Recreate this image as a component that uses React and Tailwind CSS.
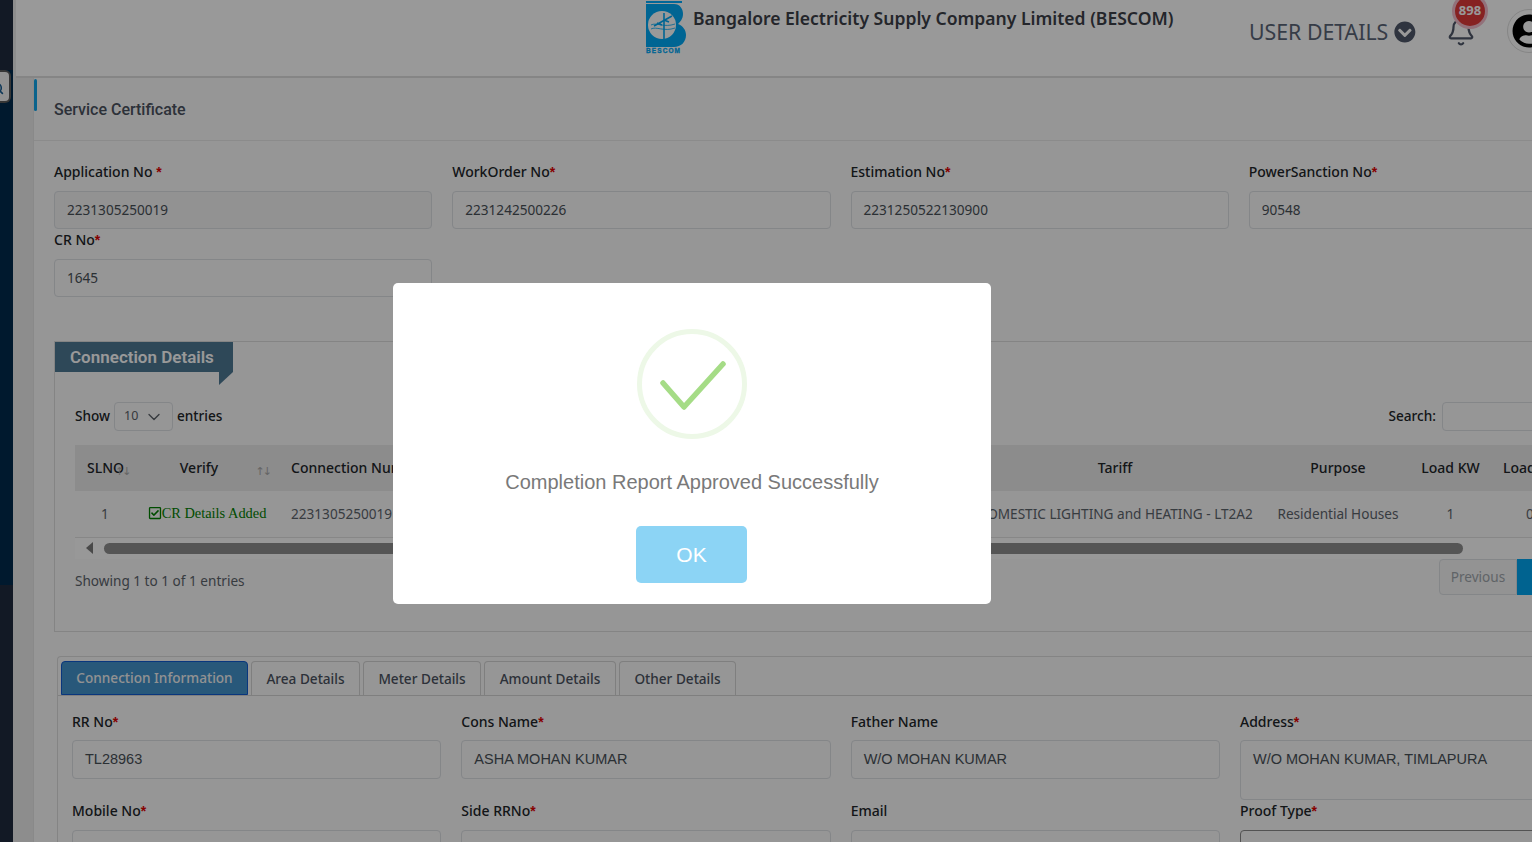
import { Bell, ChevronDown, Search } from "lucide-react";
import { FaChevronCircleDown, FaRegCheckSquare, FaUserCircle } from "react-icons/fa";

function Star() {
  return <span className="font-['Liberation_Sans',sans-serif] font-bold text-[#e00000]">*</span>;
}

function TopField({ label, value, space, muted }) {
  return (
    <div>
      <label className="block h-[22px] mb-2 text-[14px] leading-[22px] font-medium text-[#212529]">
        {label}
        {space ? " " : ""}
        <Star />
      </label>
      <div
        className={`h-[38px] px-3 flex items-center rounded border border-[#dcdfe3] text-[13.6px] text-[#495057] ${
          muted ? "bg-[#f3f3f4]" : "bg-[#fafafa]"
        }`}
      >
        {value}
      </div>
    </div>
  );
}

function InfoField({ label, required, value, area, dark, low }) {
  return (
    <div>
      <label
        className={`block h-[21px] text-[14px] leading-[21px] font-medium text-[#212529] ${low ? "mb-[9px]" : "mb-2"}`}
      >
        {label}
        {required && <Star />}
      </label>
      <div
        className={`px-3 rounded border bg-[#fafafa] font-['Liberation_Sans',sans-serif] text-[14.5px] text-[#495057] ${
          dark ? "border-[#8a8a8a]" : "border-[#dcdfe3]"
        } ${area ? "h-[60px] pt-[8px]" : "h-[39px] flex items-center"}`}
      >
        {value}
      </div>
    </div>
  );
}

function Sort({ className }) {
  return (
    <span
      className={`absolute font-['DejaVu_Sans',sans-serif] text-[11px] leading-[13px] font-normal tracking-[-2px] text-[#a8a8a8] ${className}`}
    >
      ↑↓
    </span>
  );
}

function Logo() {
  return (
    <svg width="44" height="54" viewBox="0 0 44 54" className="shrink-0">
      <rect x="2" y="0" width="36" height="2" fill="#00acff" />
      <path
        d="M2 3H30C36 3 39 8 39 13C39 18 36 21 34 23C39 25 42 29 42 34C42 41 37 46 30 46H2Z"
        fill="#00a8f5"
      />
      <circle cx="18" cy="24" r="14" fill="#fff" />
      <g stroke="#00a8f5" fill="none">
        <path d="M20 12V38" strokeWidth="1.6" />
        <path d="M7 24C12 21 20 27 31 23M7 28C12 25 20 31 31 27" strokeWidth="0.8" />
        <path d="M10 25L28 15M13 22L18 24M20 19L25 21" strokeWidth="1.6" />
      </g>
      <text
        x="2"
        y="52"
        textLength="34"
        className="font-['Liberation_Sans',sans-serif] text-[6.5px] font-bold"
        fill="#00a8f5"
        stroke="#00a8f5"
        strokeWidth="0.3"
      >
        BESCOM
      </text>
    </svg>
  );
}

const tabs = ["Area Details", "Meter Details", "Amount Details", "Other Details"];

export default function App() {
  return (
    <div className="relative flex h-screen w-full overflow-hidden bg-[#ececec] font-['Noto_Sans',sans-serif]">
      {/* Sidebar */}
      <div className="w-[13px] shrink-0 flex flex-col">
        <div className="h-[70px] bg-[#1e2b3f]" />
        <div className="h-[515px] bg-[#002b4d]" />
        <div className="flex-1 bg-[#1e2b3f]" />
      </div>
      <div className="absolute left-0 top-[70px] z-10 flex h-[33px] w-[11px] items-center overflow-hidden rounded-r-md border-r-2 border-y-2 border-[#5a5a5a] bg-[#f4f4f4]">
        <Search size={13} strokeWidth={3} className="-ml-[9px] mt-1 shrink-0 text-[#1b5f94]" />
      </div>

      <div className="flex-1 min-w-0 flex flex-col">
        {/* Header */}
        <header className="ml-[3px] h-[78px] shrink-0 flex border-b-2 border-[#dedede] bg-white">
          <div className="ml-[628px] mt-[1px]">
            <Logo />
          </div>
          <div className="ml-[5px] mt-[6px] w-[481px] shrink-0 whitespace-nowrap text-[17.55px] leading-[25px] font-semibold text-[#3c4048]">
            Bangalore Electricity Supply Company Limited (BESCOM)
          </div>
          <div className="ml-[75px] mt-[17px] flex h-[30px] w-[167px] shrink-0 items-center whitespace-nowrap text-[21.3px] text-[#5b6577]">
            USER DETAILS
            <FaChevronCircleDown size={22} className="ml-[6px] text-[#4f5869]" />
          </div>
          <div className="relative ml-[30px] mt-[17px] h-[30px] w-[30px] shrink-0">
            <Bell size={30} strokeWidth={1.8} className="text-[#4f5869]" />
            <span className="absolute left-[6px] top-[-24px] flex h-[36px] w-[36px] items-center justify-center rounded-full border-[3px] border-[#f4bccb] bg-[#e03a3a] text-[13px] font-bold text-white">
              898
            </span>
          </div>
          <div className="ml-[31px] mt-[9px] flex h-[44px] w-[44px] shrink-0 items-center justify-center rounded-full border border-[#dedede]">
            <FaUserCircle size={34} className="text-black" />
          </div>
        </header>

        {/* Card */}
        <main className="relative ml-[20px] w-[1614px] flex-1 border-l border-[#e4e4e4] bg-[#fafafa]">
          <div className="absolute left-0 top-[1px] h-[32px] w-[3px] rounded-full bg-[#12a5ea]" />
          <div className="h-[63px] flex items-center px-5 pt-[2px] border-b border-[#e8e8e8] font-['Roboto',sans-serif] text-[16px] font-medium text-[#4b535f]">
            Service Certificate
          </div>

          <div className="px-5 pt-5">
            <div className="grid grid-cols-4 gap-x-5">
              <TopField label="Application No" space value="2231305250019" muted />
              <TopField label="WorkOrder No" value="2231242500226" />
              <TopField label="Estimation No" value="2231250522130900" />
              <TopField label="PowerSanction No" value="90548" />
              <TopField label="CR No" value="1645" />
            </div>

            {/* Connection Details */}
            <section className="relative mt-[44px] h-[291px] border border-[#dcdcdc]">
              <div className="relative h-[30px] w-[178px] bg-[#4e7893] pl-[15px] font-['Roboto',sans-serif] text-[17px] leading-[30px] font-semibold text-white">
                Connection Details
                <div className="absolute right-0 top-[30px] h-0 w-0 border-t-[13px] border-r-[14px] border-t-[#4e7893] border-r-transparent" />
              </div>

              <div className="px-5 pt-[30px]">
                <div className="flex h-[29px] items-center justify-between text-[13.6px] font-medium text-[#212529]">
                  <div className="flex items-center">
                    Show
                    <span className="mx-1 flex h-[29px] w-[59px] items-center justify-between rounded border border-[#dcdfe3] pl-[9px] pr-[8px] text-[12.5px] font-normal text-[#5b6168]">
                      10
                      <ChevronDown size={20} strokeWidth={1.6} />
                    </span>
                    entries
                  </div>
                  <div className="flex items-center">
                    Search:
                    <span className="ml-[6px] h-[29px] w-[164px] rounded border border-[#dcdfe3]" />
                  </div>
                </div>

                <div className="mt-[14px] overflow-hidden">
                  <table className="w-[1700px] table-fixed border-collapse text-[13.6px]">
                    <colgroup>
                      <col className="w-[60px]" />
                      <col className="w-[144px]" />
                      <col className="w-[685px]" />
                      <col className="w-[302px]" />
                      <col className="w-[144px]" />
                      <col className="w-[81px]" />
                      <col />
                    </colgroup>
                    <thead>
                      <tr className="h-[46px] bg-[#e9e9e9] text-[14px] text-[#212529]">
                        <th className="relative pl-3 pb-[2px] text-left font-medium">
                          SLNO
                          <Sort className="left-[40px] top-[20px]" />
                        </th>
                        <th className="relative pr-[16px] pb-[2px] font-medium">
                          Verify
                          <Sort className="right-[9px] top-[20px]" />
                        </th>
                        <th className="pl-3 pb-[2px] text-left font-medium">Connection Number</th>
                        <th className="pb-[2px] font-medium">Tariff</th>
                        <th className="pb-[2px] font-medium">Purpose</th>
                        <th className="pb-[2px] font-medium">Load KW</th>
                        <th className="pl-3 pb-[2px] text-left font-medium">Load HP</th>
                      </tr>
                    </thead>
                    <tbody>
                      <tr className="h-[46px] border-b border-[#e2e2e2] text-[#5d646c]">
                        <td className="text-center">1</td>
                        <td className="text-center whitespace-nowrap font-['Liberation_Serif',serif] text-[14.4px] text-[green]">
                          <FaRegCheckSquare size={14} className="inline align-[-2px]" />
                          CR Details Added
                        </td>
                        <td className="pl-3">2231305250019</td>
                        <td className="text-center whitespace-nowrap">DOMESTIC LIGHTING and HEATING - LT2A2</td>
                        <td className="text-center whitespace-nowrap">Residential Houses</td>
                        <td className="text-center">1</td>
                        <td className="pl-[35px]">0</td>
                      </tr>
                    </tbody>
                  </table>
                </div>

                <div className="flex h-[21px] items-center bg-[#fdfdfd]">
                  <div className="ml-[11px] h-0 w-0 border-y-[6px] border-r-[7px] border-y-transparent border-r-[#7a7a7a]" />
                  <div className="ml-[11px] h-[11px] w-[1359px] rounded-full bg-[#8e8e8e]" />
                </div>

                <div className="flex justify-between">
                  <div className="mt-[12px] text-[13.6px] leading-[20px] text-[#5d646c]">
                    Showing 1 to 1 of 1 entries
                  </div>
                  <div className="flex h-[36px] text-[13.6px]">
                    <span className="flex w-[78px] items-center justify-center rounded-l border border-[#dcdfe3] bg-[#f5f5f5] pt-[2px] text-[#a0a6ac]">
                      Previous
                    </span>
                    <span className="flex w-[39px] items-center justify-center bg-[#00a5f0] text-white">1</span>
                    <span className="flex w-[50px] items-center justify-center rounded-r border border-[#dcdfe3] text-[#a0a6ac]">
                      Next
                    </span>
                  </div>
                </div>
              </div>
            </section>

            {/* Tabs */}
            <section className="mt-[24px] ml-[3px] rounded-t border-t border-l border-[#dcdcdc]">
              <div className="flex gap-[3px] pl-[3px] pt-1 h-[38px] text-[13.6px] font-medium">
                <div className="flex w-[187px] items-center justify-center rounded-t border border-[#0f5ad0] bg-[#4393cc] pt-px text-[#f4f4f4]">
                  Connection Information
                </div>
                {tabs.map((tab) => (
                  <div
                    key={tab}
                    className={`flex items-center justify-center rounded-t border border-b-0 border-[#d4d4d4] pt-px text-[#4b535f] ${
                      tab === "Area Details"
                        ? "w-[109px]"
                        : tab === "Meter Details"
                          ? "w-[118px]"
                          : tab === "Amount Details"
                            ? "w-[132px]"
                            : "w-[117px]"
                    }`}
                  >
                    {tab}
                  </div>
                ))}
              </div>
              <div className="border-t border-[#d4d4d4] pl-[14px] pt-[15px]">
                <div className="grid grid-cols-[repeat(4,369.33px)] gap-x-5 items-start">
                  <InfoField label="RR No" required value="TL28963" />
                  <InfoField label="Cons Name" required value="ASHA MOHAN KUMAR" />
                  <InfoField label="Father Name" value="W/O MOHAN KUMAR" />
                  <InfoField label="Address" required area value="W/O MOHAN KUMAR, TIMLAPURA" />
                  <InfoField label="Mobile No" required low />
                  <InfoField label="Side RRNo" required low />
                  <InfoField label="Email" low />
                  <InfoField label="Proof Type" required dark low />
                </div>
              </div>
            </section>
          </div>
        </main>
      </div>

      {/* Success dialog */}
      <div className="absolute inset-0 z-20 flex justify-center bg-black/40 pt-[283px] pr-[148px] font-['Liberation_Sans',sans-serif]">
        <div className="h-[321px] w-[598px] rounded-[5px] bg-white pt-[46px] flex flex-col items-center">
          <div className="relative h-[110px] w-[110px] rounded-full border-[5px] border-[#edf8e7]">
            <svg width="110" height="110" viewBox="0 0 110 110" className="absolute -left-[5px] -top-[5px]">
              <path
                d="M26 54L47 78L86 35"
                fill="none"
                stroke="#a5dc86"
                strokeWidth="5.5"
                strokeLinecap="round"
                strokeLinejoin="round"
              />
            </svg>
          </div>
          <p className="mt-[29px] h-[28px] text-[20px] leading-[28px] text-[#797979]">
            Completion Report Approved Successfully
          </p>
          <button className="mt-[30px] mr-px h-[57px] w-[111px] rounded-[5px] bg-[#8cd4f5] text-[21px] text-white">
            OK
          </button>
        </div>
      </div>
    </div>
  );
}
